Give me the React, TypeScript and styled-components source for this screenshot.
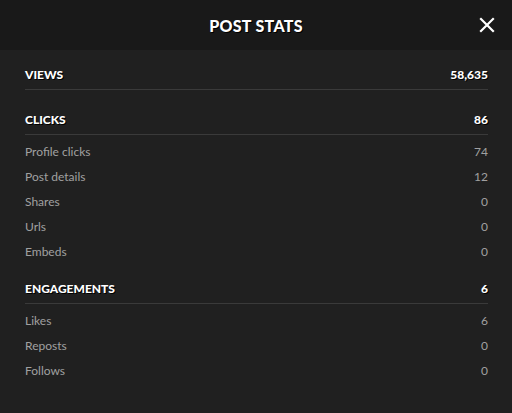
import React from "react";
import styled, { createGlobalStyle } from "styled-components";

const Global = createGlobalStyle`
  html, body { margin: 0; padding: 0; background: #202020; }
  body { font-family: Lato, "Open Sans", sans-serif; }
`;

const Modal = styled.div`
  width: 512px;
  height: 413px;
  background: #202020;
  display: flex;
  flex-direction: column;
  overflow: hidden;
`;

const Header = styled.header`
  height: 50px;
  flex: none;
  background: #191919;
  display: flex;
  align-items: center;
  justify-content: center;
  position: relative;
`;

const Title = styled.h1`
  margin: 0;
  font-size: 16px;
  font-weight: 900;
  color: #fff;
  letter-spacing: 0.3px;
  text-shadow: 1px 1px 0 #000;
`;

const Close = styled.button`
  position: absolute;
  right: 16px;
  top: 16px;
  width: 18px;
  height: 18px;
  padding: 0;
  border: none;
  background: none;
  display: flex;
  align-items: center;
  justify-content: center;
  cursor: pointer;
`;

const Body = styled.div`
  padding: 9px 24px 0 25px;
  display: flex;
  flex-direction: column;
`;

const Section = styled.section<{ $spacing: number }>`
  margin-bottom: ${(p) => p.$spacing}px;
`;

const HeadRow = styled.div`
  height: 30px;
  display: flex;
  align-items: center;
  justify-content: space-between;
  border-bottom: 1px solid #3a3a3a;
  font-size: 12px;
  font-weight: 900;
  color: #fff;
  text-shadow: 1px 1px 0 #000;
`;

const List = styled.div`
  padding-top: 4px;
`;

const Row = styled.div`
  height: 25px;
  display: flex;
  align-items: center;
  justify-content: space-between;
  font-size: 12px;
  color: #a0a0a0;
`;

type Stat = { label: string; value: string };
type Group = { title: string; total: string; items: Stat[] };

const groups: Group[] = [
  { title: "VIEWS", total: "58,635", items: [] },
  {
    title: "CLICKS",
    total: "86",
    items: [
      { label: "Profile clicks", value: "74" },
      { label: "Post details", value: "12" },
      { label: "Shares", value: "0" },
      { label: "Urls", value: "0" },
      { label: "Embeds", value: "0" },
    ],
  },
  {
    title: "ENGAGEMENTS",
    total: "6",
    items: [
      { label: "Likes", value: "6" },
      { label: "Reposts", value: "0" },
      { label: "Follows", value: "0" },
    ],
  },
];

export default function App() {
  return (
    <>
      <Global />
      <Modal>
        <Header>
          <Title>POST STATS</Title>
          <Close aria-label="Close">
            <svg width="16" height="16" viewBox="0 0 16 16">
              <path d="M2 2 L14 14 M14 2 L2 14" stroke="#fff" strokeWidth="2.2" strokeLinecap="square" />
            </svg>
          </Close>
        </Header>
        <Body>
          {groups.map((g) => (
            <Section key={g.title} $spacing={g.items.length ? 9 : 14}>
              <HeadRow>
                <span>{g.title}</span>
                <span>{g.total}</span>
              </HeadRow>
              {g.items.length > 0 && (
                <List>
                  {g.items.map((s) => (
                    <Row key={s.label}>
                      <span>{s.label}</span>
                      <span>{s.value}</span>
                    </Row>
                  ))}
                </List>
              )}
            </Section>
          ))}
        </Body>
      </Modal>
    </>
  );
}
